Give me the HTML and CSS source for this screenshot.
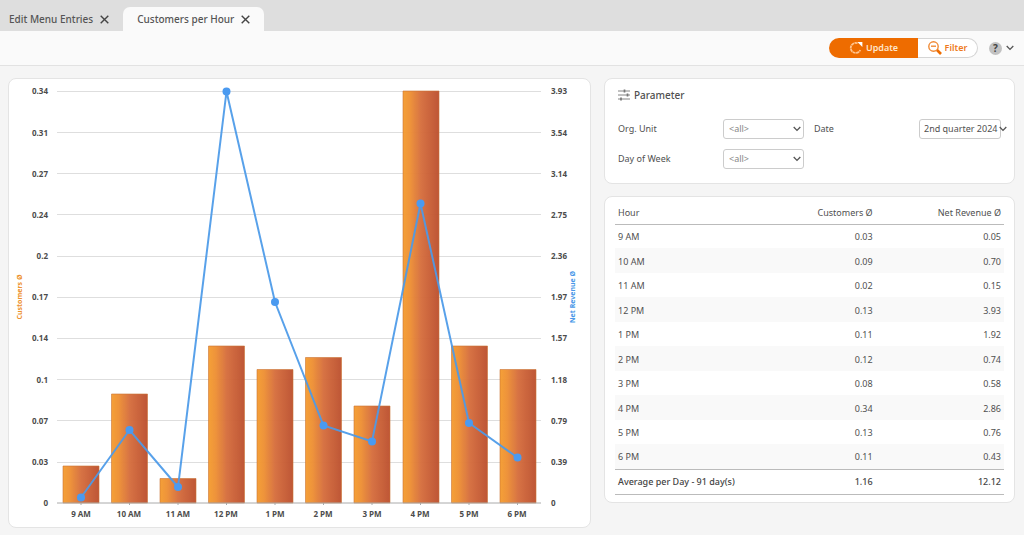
FILE: index.html
```html
<!DOCTYPE html>
<html lang="en">
<head>
<meta charset="utf-8">
<meta name="viewport" content="width=device-width, initial-scale=1">
<title>Customers per Hour</title>
<link rel="stylesheet" href="styles.css">
</head>
<body>
<nav class="tabs">
  <div class="tab"><a href="#menu">Edit Menu Entries</a><button type="button" aria-label="Close Edit Menu Entries"><svg width="9" height="9" viewBox="0 0 9 9"><path d="M.7 .7l7.600 7.600M8.300 .7L.7 8.300"/></svg></button></div>
  <div class="tab active"><a href="#customers">Customers per Hour</a><button type="button" aria-label="Close Customers per Hour"><svg width="9" height="9" viewBox="0 0 9 9"><path d="M.7 .7l7.600 7.600M8.300 .7L.7 8.300"/></svg></button></div>
</nav>
<header class="toolbar">
  <div class="actions">
    <button type="button" class="update"><svg width="14" height="14" viewBox="0 0 14 14" fill="none" stroke="#ffc58f" stroke-width="1.700"><path d="M8.500 2.300A5 5 0 1 0 11.300 9" stroke-dasharray="3 .5"/><path d="M8.400 1h5v5z" fill="#fff" stroke="none"/></svg>Update</button>
    <button type="button" class="filter"><svg width="14" height="14" viewBox="0 0 14 14" fill="none" stroke="#f08a35"><circle cx="5.500" cy="5.500" r="4.700" stroke-width="1.400"/><path d="M3 5.200h5" stroke-width="1.400"/><path d="M9 9l4 4" stroke="#ee6c00" stroke-width="2.600"/></svg>Filter</button>
  </div>
  <button type="button" class="help" aria-label="Help"><span class="mark">?</span><svg width="8" height="6" viewBox="0 0 8 6"><path d="M.7 1L4 4.400 7.300 1"/></svg></button>
</header>
<main class="content">
  <section class="panel chart">
    <svg viewBox="9 79 581 448" role="img" aria-label="Customers and net revenue per hour">
      <defs><linearGradient id="bar"><stop offset="0" stop-color="#f59d31"/><stop offset=".2" stop-color="#ee9035"/><stop offset=".5" stop-color="#d66f3e"/><stop offset="1" stop-color="#bd5130"/></linearGradient></defs>
      <path class="grid" d="M57 91.500H541M57 132.500H541M57 173.500H541M57 214.500H541M57 256.500H541M57 297.500H541M57 338.500H541M57 379.500H541M57 420.500H541M57 462.500H541"/>
      <g class="bars">
        <path d="M63 466h36v37h-36z"/><path d="M111.500 394h36v109h-36z"/><path d="M160 478.500h36v24.500h-36z"/><path d="M208.500 346h36v157h-36z"/><path d="M257 369.500h36v133.500h-36z"/><path d="M305.500 357.500h36v145.500h-36z"/><path d="M354 406h36v97h-36z"/><path d="M403 91h36v412h-36z"/><path d="M451.500 346h36v157h-36z"/><path d="M500 369.500h36v133.500h-36z"/>
      </g>
      <path class="axis" d="M57 503H541M81 503v2M129.500 503v2M178 503v2M226.500 503v2M275 503v2M323.500 503v2M372 503v2M420.500 503v2M469 503v2M517.500 503v2"/>
      <path class="line" d="M81 497.500L129.500 430L178 487L226.500 91.500L275 302L323.500 425.500L372 441.500L420.500 203.500L469 423L517.500 457.500"/>
      <g class="points"><circle cx="81" cy="497.500" r="4"/><circle cx="129.500" cy="430" r="4"/><circle cx="178" cy="487" r="4"/><circle cx="226.500" cy="91.500" r="4"/><circle cx="275" cy="302" r="4"/><circle cx="323.500" cy="425.500" r="4"/><circle cx="372" cy="441.500" r="4"/><circle cx="420.500" cy="203.500" r="4"/><circle cx="469" cy="423" r="4"/><circle cx="517.500" cy="457.500" r="4"/></g>
      <g class="labels end"><text x="48" y="94">0.34</text><text x="48" y="136">0.31</text><text x="48" y="177">0.27</text><text x="48" y="218">0.24</text><text x="48" y="259">0.2</text><text x="48" y="300">0.17</text><text x="48" y="341">0.14</text><text x="48" y="383">0.1</text><text x="48" y="424">0.07</text><text x="48" y="465">0.03</text><text x="48" y="506">0</text></g>
      <g class="labels"><text x="551" y="94">3.93</text><text x="551" y="136">3.54</text><text x="551" y="177">3.14</text><text x="551" y="218">2.75</text><text x="551" y="259">2.36</text><text x="551" y="300">1.97</text><text x="551" y="341">1.57</text><text x="551" y="383">1.18</text><text x="551" y="424">0.79</text><text x="551" y="465">0.39</text><text x="551" y="506">0</text></g>
      <g class="labels middle"><text x="81" y="517">9 AM</text><text x="129" y="517">10 AM</text><text x="178" y="517">11 AM</text><text x="226" y="517">12 PM</text><text x="275" y="517">1 PM</text><text x="323" y="517">2 PM</text><text x="372" y="517">3 PM</text><text x="420" y="517">4 PM</text><text x="469" y="517">5 PM</text><text x="517" y="517">6 PM</text></g>
      <text class="title customers" transform="translate(22 297) rotate(-90)">Customers Ø</text>
      <text class="title revenue" transform="translate(575 297) rotate(-90)">Net Revenue Ø</text>
    </svg>
  </section>
  <div class="side">
    <section class="panel parameter">
      <h2><svg width="12" height="12" viewBox="0 0 12 12" stroke="#777" fill="none"><path d="M0 2h12M0 6h12M0 10h12" stroke-width=".9"/><path d="M6.500 .5v3M9.500 4.500v3M3 8.500v3" stroke-width="1.700"/></svg>Parameter</h2>
      <form class="fields">
        <label for="unit">Org. Unit</label>
        <div class="field"><select id="unit"><option>&lt;all&gt;</option></select><svg class="chevron" width="8" height="6" viewBox="0 0 8 6"><path d="M.7 1L4 4.400 7.300 1"/></svg></div>
        <label for="date">Date</label>
        <div class="field date"><select id="date"><option>2nd quarter 2024</option></select><svg class="chevron" width="8" height="6" viewBox="0 0 8 6"><path d="M.7 1L4 4.400 7.300 1"/></svg></div>
        <label for="day">Day of Week</label>
        <div class="field"><select id="day"><option>&lt;all&gt;</option></select><svg class="chevron" width="8" height="6" viewBox="0 0 8 6"><path d="M.7 1L4 4.400 7.300 1"/></svg></div>
      </form>
    </section>
    <section class="panel data">
      <table>
        <thead><tr><th>Hour</th><th>Customers Ø</th><th>Net Revenue Ø</th></tr></thead>
        <tbody>
          <tr><td>9 AM</td><td>0.03</td><td>0.05</td></tr>
          <tr><td>10 AM</td><td>0.09</td><td>0.70</td></tr>
          <tr><td>11 AM</td><td>0.02</td><td>0.15</td></tr>
          <tr><td>12 PM</td><td>0.13</td><td>3.93</td></tr>
          <tr><td>1 PM</td><td>0.11</td><td>1.92</td></tr>
          <tr><td>2 PM</td><td>0.12</td><td>0.74</td></tr>
          <tr><td>3 PM</td><td>0.08</td><td>0.58</td></tr>
          <tr><td>4 PM</td><td>0.34</td><td>2.86</td></tr>
          <tr><td>5 PM</td><td>0.13</td><td>0.76</td></tr>
          <tr><td>6 PM</td><td>0.11</td><td>0.43</td></tr>
        </tbody>
        <tfoot><tr><td>Average per Day - 91 day(s)</td><td>1.16</td><td>12.12</td></tr></tfoot>
      </table>
    </section>
  </div>
</main>
</body>
</html>
```
FILE: styles.css
```css
* { box-sizing: border-box; }
body { margin: 0; min-height: 100vh; background: #f5f5f5; color: #505050; font: 9px/14px "Noto Sans", "Open Sans", sans-serif; }
button, select { font: inherit; color: inherit; margin: 0; }
button { border: 0; background: none; padding: 0; cursor: pointer; }
svg { display: block; flex: none; }

.tabs { display: flex; align-items: flex-end; height: 31px; background: #dedede; font-size: 10px; font-weight: 500; }
.tab { display: flex; align-items: center; gap: 7px; height: 24px; padding: 0 14px 0 9px; }
.tab a { color: #555; text-decoration: none; white-space: nowrap; }
.tab svg { stroke: #444; stroke-width: 1.4; }
.tab.active { padding: 0 14px; border-radius: 7px 7px 0 0; background: #fafafa; }

.toolbar { display: flex; align-items: center; justify-content: flex-end; gap: 11px; height: 35px; padding-right: 10px; border-bottom: 1px solid #e2e2e2; background: #fafafa; }
.actions { display: flex; }
.actions button { display: flex; align-items: center; justify-content: center; gap: 3px; height: 20px; font-weight: 600; }
.actions .update { width: 89px; border-radius: 10px 0 0 10px; background: #ee6c00; color: #ffe6cc; }
.actions .filter { width: 60px; border: 1px solid #d5d5d5; border-left: 0; border-radius: 0 10px 10px 0; background: #fff; color: #ee7a1c; }
.help { display: flex; align-items: center; gap: 4px; font-size: 10px; }
.help svg, .chevron { fill: none; stroke: #555; stroke-width: 1.3; }
.mark { width: 13px; height: 13px; border-radius: 50%; background: #c2c2c2; color: #444; font-weight: 700; line-height: 13px; }

.content { display: grid; grid-template-columns: 583fr 411fr; align-items: start; gap: 13px; padding: 12px 9px 7px 8px; }
.panel { border: 1px solid #e4e4e4; border-radius: 8px; background: #fff; }
.chart > svg { width: 100%; height: auto; }
.grid { stroke: #dedede; stroke-width: 1.2; }
.bars { fill: url(#bar); stroke: #c9702f; stroke-width: .6; opacity: .97; }
.axis { fill: none; stroke: #aaa; }
.line { fill: none; stroke: #4b9ae8; stroke-width: 2; opacity: .93; }
.points { fill: #4a9af0; }
.labels { font: 700 8px "Open Sans", sans-serif; fill: #4c4c4c; }
.end { text-anchor: end; }
.middle, .title { text-anchor: middle; }
.title { font-size: 7px; font-weight: 700; }
.customers { fill: #ee922e; }
.revenue { fill: #4a98e8; }

.side { display: grid; gap: 12px; min-width: 0; }
.parameter { padding: 9px 9px 14px 13px; }
.parameter h2 { display: flex; align-items: center; gap: 4px; margin: 0 0 17px; font-size: 10px; font-weight: 500; }
.fields { display: grid; grid-template-columns: 105fr 91fr 105fr 86fr; align-items: center; row-gap: 10px; }
.field { display: flex; align-items: center; padding-right: 10px; }
.field select { appearance: none; width: 100%; height: 20px; padding: 0 5px; border: 1px solid #ccc; border-radius: 3px; background: #fff; color: #888; }
.field .chevron { margin-left: -11px; pointer-events: none; }
.field.date { padding-right: 4px; }
.field.date select { padding: 0 0 0 4px; color: #505050; }
.field.date .chevron { margin-left: -2px; margin-right: -6px; }
.field:last-child { grid-column: 2; }

.data { padding: 3px 10px 7px; }
table { width: 100%; border-collapse: collapse; table-layout: fixed; }
th, td { height: 24px; padding: 2px 3px 0; text-align: right; font-weight: 400; white-space: nowrap; }
th:first-child, td:first-child { width: 48%; text-align: left; }
th:nth-child(2) { width: 19%; }
tbody tr:nth-child(even) { background: #f9f9f9; }
tbody tr:nth-child(even) td { height: 25px; }
thead th, tfoot td { border-bottom: 1px solid #bbb; }
tfoot td { height: 25px; padding-top: 0; border-top: 1px solid #bbb; font-weight: 500; color: #444; }
```
